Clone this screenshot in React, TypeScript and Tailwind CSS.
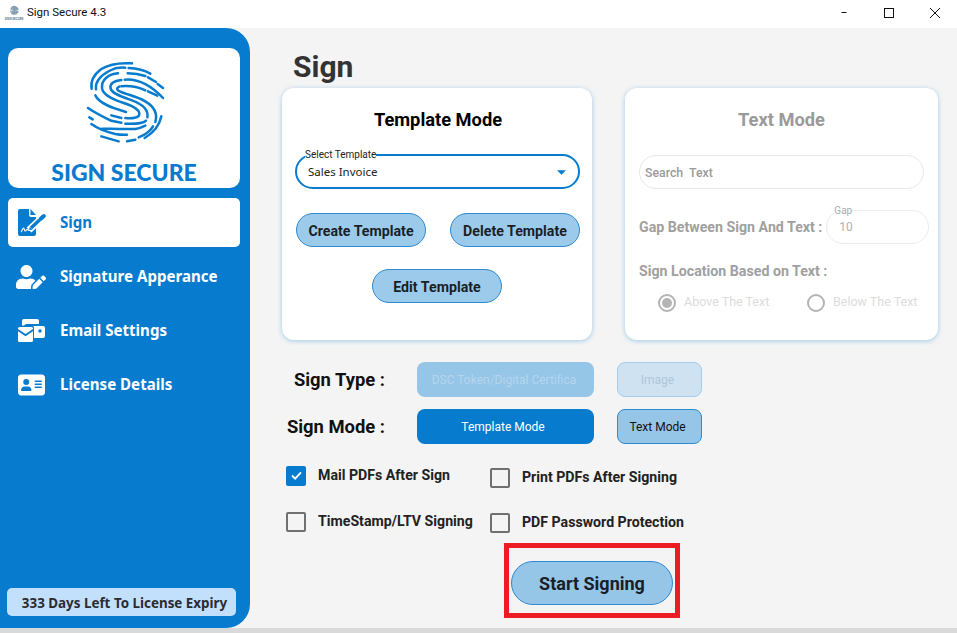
import React from "react";
import { FaUserEdit } from "react-icons/fa";
import { FaAddressCard } from "react-icons/fa6";

const roboto = "font-['Roboto',sans-serif]";
const noto = "font-['Noto_Sans',sans-serif]";

const fingerprintPaths = [
  "M29 92C25 70 35 50 58 33C85 16 120 14 150 16",
  "M42 94C38 70 60 45 100 31C110 29 120 28 130 29",
  "M140 30C165 31 190 38 205 47",
  "M108 46C80 48 58 65 60 90C62 112 95 125 125 135C150 143 172 155 172 168C172 180 150 182 130 180",
  "M118 180L88 172",
  "M137 46C155 46 172 48 190 54",
  "M198 58L222 72",
  "M227 78L243 90",
  "M118 66C95 68 82 78 86 92C90 108 125 118 150 127C180 138 200 155 196 178",
  "M192 188C182 198 160 198 130 197",
  "M118 194L88 188",
  "M128 65C160 62 200 75 243 120",
  "M118 85C150 82 170 88 190 97",
  "M198 100L226 113",
  "M112 86C102 90 104 97 115 101C135 110 165 115 190 130C215 145 228 165 220 192",
  "M213 205C205 220 190 230 170 238",
  "M40 112C50 136 90 150 132 162",
  "M18 150C40 165 60 175 85 187",
  "M22 178L32 184",
  "M28 198C45 210 75 222 100 228C115 231 125 231 135 230",
  "M60 212C85 212 110 214 160 213C170 212 180 208 190 203",
  "M58 235L110 250",
  "M135 250L160 245",
  "M188 240C212 226 232 205 238 175",
];

function Fingerprint({ className, color = "#077bce", sw = 7.5 }: { className: string; color?: string; sw?: number }) {
  return (
    <svg viewBox="0 0 264 276" className={className} fill="none" stroke={color} strokeWidth={sw} strokeLinecap="round">
      {fingerprintPaths.map((d, i) => (
        <path key={i} d={d} />
      ))}
    </svg>
  );
}

function SignIcon() {
  return (
    <svg viewBox="0 0 28 27" className="w-[28px] h-[27px]">
      <path d="M2 0H11V6a2 2 0 0 0 2 2H18V25a2 2 0 0 1-2 2H2a2 2 0 0 1-2-2V2a2 2 0 0 1 2-2Z" fill="#077bce" />
      <path d="M12.500 0 18 6H12.500Z" fill="#077bce" />
      <path d="M11 21 24 9" stroke="#fff" strokeWidth="7" />
      <path d="M13 19 21.500 11" stroke="#077bce" strokeWidth="3.500" />
      <path d="M11 21.500l.8-3.500 2.700 2.600Z" fill="#077bce" />
      <path d="M22.800 9.800 25.800 7" stroke="#077bce" strokeWidth="4" strokeLinecap="round" />
      <path d="M3 23c1-.5 1.500-4 2.500-4s.8 3.500 2 3 1-2 2-1.500 1.500 1.500 3 .8" fill="none" stroke="#fff" strokeWidth="1.100" />
    </svg>
  );
}

function MailIcon() {
  return (
    <svg viewBox="0 0 27 23" className="w-[27px] h-[23px]" fill="#fff">
      <path d="M4 9V2a2 2 0 0 1 2-2H19a2 2 0 0 1 2 2V5H9a3 3 0 0 0-3 3V9Z" />
      <rect x="7" y="7" width="20" height="12" rx="2" />
      <circle cx="22" cy="12" r="1.700" fill="#077bce" />
      <rect x="-1" y="6.500" width="17" height="17" rx="2" fill="#077bce" />
      <path d="M0 9.500A1.500 1.500 0 0 1 1.500 8h12A1.500 1.500 0 0 1 15 9.500V10l-7.500 5L0 10Z" />
      <path d="M0 12.200l7.500 5 7.500-5V21.500A1.500 1.500 0 0 1 13.500 23h-12A1.500 1.500 0 0 1 0 21.500Z" />
    </svg>
  );
}

function NavItem({ icon, label, active }: { icon: React.ReactNode; label: string; active?: boolean }) {
  return (
    <div className={`flex items-center h-[49px] ml-[8px] mr-[10px] rounded-[5px] ${active ? "bg-white text-[#077bce]" : "text-white"}`}>
      <div className="w-[52px] pl-[10px] flex items-center">{icon}</div>
      <span className={`${noto} font-bold text-[15.1px]`}>{label}</span>
    </div>
  );
}

function PillButton({ label, className = "" }: { label: string; className?: string }) {
  return (
    <button className={`${roboto} w-[130px] h-[34px] pt-[3px] rounded-full bg-[#9bcaeb] border border-[#2f8ad0] text-[#1a1f26] font-bold text-[14.2px] ${className}`}>
      {label}
    </button>
  );
}

function Check({ label, checked, className = "" }: { label: string; checked?: boolean; className?: string }) {
  return (
    <div className={`flex items-center ${className}`}>
      <span className={`w-[20px] h-[20px] rounded-[2px] flex items-center justify-center ${checked ? "bg-[#077bce]" : "border-2 border-[#707070]"}`}>
        {checked && (
          <svg viewBox="0 0 12 10" className="w-[11px] h-[9px]" fill="none" stroke="#fff" strokeWidth="2">
            <path d="M1 5l3.500 3.500L11 1.500" />
          </svg>
        )}
      </span>
      <span className={`${roboto} ml-[12px] font-bold text-[14.15px] text-[#222]`}>{label}</span>
    </div>
  );
}

function Radio({ label, checked, className = "" }: { label: string; checked?: boolean; className?: string }) {
  return (
    <div className={`flex items-center ${className}`}>
      <span className="w-[18px] h-[18px] rounded-full border-2 border-[#b4b4b4] flex items-center justify-center">
        {checked && <span className="w-[10px] h-[10px] rounded-full bg-[#b4b4b4]" />}
      </span>
      <span className={`${roboto} ml-[8px] text-[12.5px] text-[#dcdcdc]`}>{label}</span>
    </div>
  );
}

export default function App() {
  return (
    <div className="w-[957px] h-[633px] overflow-hidden flex flex-col bg-[#f4f4f4]">
      <div className="h-[28px] shrink-0 bg-white flex items-center pb-[3px]">
        <div className="ml-[6px] w-[16px] flex flex-col items-center">
          <Fingerprint className="w-[9px] h-[11px]" color="#6b8ba3" sw={24} />
          <span className={`${roboto} mt-[2px] text-[3px] leading-[3px] font-bold text-[#5b7a94] whitespace-nowrap`}>SIGN SECURE</span>
        </div>
        <span className={`${roboto} ml-[5px] text-[11.5px] text-[#111]`}>Sign Secure 4.3</span>
        <div className="ml-auto flex items-center h-full">
          <svg viewBox="0 0 10 2" className="w-[10px] h-[1px] mr-[35px]"><rect width="10" height="2" fill="#111" /></svg>
          <span className="w-[10px] h-[10px] border border-[#111] mr-[36px]" />
          <svg viewBox="0 0 10 10" className="w-[10px] h-[10px] mr-[17px]" stroke="#111" fill="none"><path d="M0 0l10 10M10 0L0 10" /></svg>
        </div>
      </div>

      <div className="flex h-[600px] shrink-0">
        <aside className="w-[250px] shrink-0 bg-[#077bce] rounded-r-[24px] flex flex-col pt-[20px]">
          <div className="ml-[8px] mr-[10px] h-[140px] bg-white rounded-[10px] flex flex-col items-center pt-[10px]">
            <Fingerprint className="ml-[4px] w-[88px] h-[92px] shrink-0" />
            <span className="font-['Lato',sans-serif] font-black text-[#077bce] text-[23px] leading-[23px] mt-[11px] whitespace-nowrap">SIGN SECURE</span>
          </div>
          <div className="mt-[10px] flex flex-col gap-[5px]">
            <NavItem active label="Sign" icon={<SignIcon />} />
            <NavItem label="Signature Apperance" icon={<FaUserEdit className="w-[30px] h-[24px] -ml-[2px]" />} />
            <NavItem label="Email Settings" icon={<MailIcon />} />
            <NavItem label="License Details" icon={<FaAddressCard className="w-[27px] h-[24px]" />} />
          </div>
          <div className={`${noto} mt-auto mb-[12px] ml-[7px] w-[229px] h-[28px] pt-[2px] pl-[6px] rounded-[5px] bg-[#c2e0fb] text-[#2b2b30] font-bold text-[13.4px] flex items-center justify-center whitespace-nowrap`}>
            333 Days Left To License Expiry
          </div>
        </aside>

        <main className="flex-1 pl-[32px] flex flex-col">
          <div className={`${roboto} h-[60px] pl-[11px] flex items-center pt-[17px] text-[30px] font-bold text-[#333]`}>Sign</div>

          <div className="flex gap-[33px]">
            <section className="w-[310px] h-[252px] bg-white rounded-[12px] shadow-[0_1px_5px_rgba(90,165,220,0.55)] flex flex-col items-center">
              <h2 className={`${roboto} mt-[20px] ml-[2px] text-[18.3px] leading-[24px] font-bold text-black`}>Template Mode</h2>
              <div className="relative mt-[22px] ml-[1px] w-[285px] h-[35px] border-2 border-[#077bce] rounded-full flex items-center pl-[11px]">
                <span className={`${roboto} absolute -top-[7px] left-[8px] bg-white text-[10px] leading-[12px] text-[#222]`}>Select Template</span>
                <span className={`${noto} text-[11.5px] text-[#222]`}>Sales Invoice</span>
                <svg viewBox="0 0 10 5" className="absolute right-[12px] top-[14px] w-[9px] h-[5px]"><path d="M0 0h10L5 5Z" fill="#077bce" /></svg>
              </div>
              <div className="mt-[24px] ml-[2px] w-[284px] flex justify-between">
                <PillButton label="Create Template" />
                <PillButton label="Delete Template" />
              </div>
              <PillButton label="Edit Template" className="mt-[22px]" />
            </section>

            <section className="w-[313px] h-[252px] bg-white rounded-[12px] shadow-[0_1px_5px_rgba(90,165,220,0.55)] flex flex-col px-[14px]">
              <h2 className={`${roboto} mt-[20px] text-[18.3px] leading-[24px] font-bold text-[#9a9a9a] text-center`}>Text Mode</h2>
              <div className={`${roboto} mt-[23px] w-[285px] h-[34px] pt-[2px] border border-[#e8e8e8] rounded-full flex items-center pl-[5px] text-[12.3px] font-medium text-[#9a9a9a] whitespace-pre`}>Search  Text</div>
              <div className="mt-[21px] flex items-center">
                <span className={`${roboto} pt-[2px] text-[14.2px] font-bold text-[#a0a0a0] whitespace-nowrap`}>Gap Between Sign And Text :</span>
                <div className="relative ml-[4px] w-[103px] h-[34px] shrink-0 border border-[#ececec] rounded-full flex items-center pl-[12px]">
                  <span className={`${roboto} absolute -top-[6px] left-[7px] bg-white text-[10px] leading-[12px] text-[#aaa]`}>Gap</span>
                  <span className={`${roboto} text-[12px] text-[#b0b0b0]`}>10</span>
                </div>
              </div>
              <div className={`${roboto} mt-[17px] text-[14.2px] font-bold text-[#a0a0a0]`}>Sign Location Based on Text :</div>
              <div className="mt-[11px] ml-[19px] flex">
                <Radio checked label="Above The Text" className="w-[149px]" />
                <Radio label="Below The Text" />
              </div>
            </section>
          </div>

          <div className="mt-[22px] flex items-center h-[35px]">
            <span className={`${roboto} w-[103px] text-right text-[18.4px] font-bold text-[#111]`}>Sign Type :</span>
            <button className={`${roboto} ml-[32px] w-[177px] h-full pr-[3px] rounded-[8px] bg-[#95c5e7] text-[12px] text-[#b5d6ee]`}>DSC Token/Digital Certifica</button>
            <button className={`${roboto} ml-[23px] w-[85px] h-full pr-[4px] rounded-[8px] bg-[#cfe2f2] border border-[#a5cdeb] text-[12px] text-[#aec6d9]`}>Image</button>
          </div>
          <div className="mt-[12px] flex items-center h-[35px]">
            <span className={`${roboto} w-[103px] text-right text-[18.4px] font-bold text-[#111]`}>Sign Mode :</span>
            <button className={`${roboto} ml-[32px] w-[177px] h-full pr-[5px] rounded-[8px] bg-[#077bce] text-[12px] text-white`}>Template Mode</button>
            <button className={`${roboto} ml-[23px] w-[85px] h-full pr-[4px] rounded-[8px] bg-[#95c5e7] border border-[#2f8ad0] text-[12px] text-[#111]`}>Text Mode</button>
          </div>

          <div className="mt-[21px] ml-[4px] flex">
            <div className="w-[204px] flex flex-col gap-[25px]">
              <Check checked label="Mail PDFs After Sign" />
              <Check label="TimeStamp/LTV Signing" />
            </div>
            <div className="mt-[2px] flex flex-col gap-[24px]">
              <Check label="Print PDFs After Signing" />
              <Check label="PDF Password Protection" />
            </div>
          </div>

          <div className="mt-[10px] ml-[222px] w-[176px] h-[75px] border-[5px] border-[#ed1c24] flex items-start justify-center pt-[13px]">
            <button className={`${roboto} w-[162px] h-[44px] rounded-full bg-[#95c5e7] border border-[#2f8ad0] text-[#1a1f26] font-bold text-[18px]`}>Start Signing</button>
          </div>
        </main>
      </div>
      <div className="flex-1 bg-[#d9d9d9]" />
    </div>
  );
}
